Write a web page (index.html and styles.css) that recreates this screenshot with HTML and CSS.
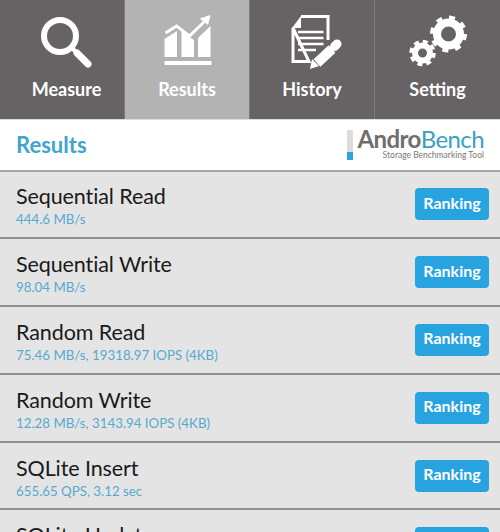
FILE: index.html
```html
<!DOCTYPE html>
<html lang="en">
<head>
  <meta charset="UTF-8" />
  <title>AndroBench - Results</title>
  <link rel="stylesheet" href="styles.css">
</head>
<body>
  <nav class="tabs">
    <a class="tab">
      <svg class="tab-icon" viewBox="0 0 80 60">
        <circle cx="33" cy="23" r="16" fill="none" stroke="#fff" stroke-width="6" />
        <path d="M44 34 L50 40" stroke="#fff" stroke-width="4" />
        <path d="M50 40 L61 51" stroke="#fff" stroke-width="7" stroke-linecap="round" />
      </svg>
      <span>Measure</span>
    </a>
    <a class="tab active">
      <svg class="tab-icon" viewBox="0 0 80 60">
        <path d="M17.5 44 V26 L30 18 V44 Z M34.5 44 V18.5 L47 27 V44 Z M51 44 V25 L63.5 13 V44 Z" fill="#fff" />
        <path d="M18.5 20 L29.5 13 L42.5 23 L57 9" fill="none" stroke="#fff" stroke-width="3" />
        <path d="M52.5 5.5 L63.5 2 L61 12 Z" fill="#fff" />
        <rect x="17.5" y="48" width="47" height="4" fill="#fff" />
      </svg>
      <span>Results</span>
    </a>
    <a class="tab">
      <svg class="tab-icon" viewBox="0 0 80 60">
        <path d="M29 3.5 H56 V27 M37 48.5 H21 V15 Z" fill="none" stroke="#fff" stroke-width="3" />
        <path d="M20 15 L29 3 V15 Z" fill="#fff" />
        <path d="M26 19 H51.5 M26 25 H51.5 M26 31 H51.5 M26 37 H44" stroke="#fff" stroke-width="2.5" />
        <path d="M45 50 L65 31" stroke="#676365" stroke-width="14" />
        <path d="M45 50 L60 36" stroke="#fff" stroke-width="10" />
        <path d="M62.5 33.5 L65 31" stroke="#fff" stroke-width="9" stroke-linecap="round" />
        <path d="M40 46 L47 53 L38 56 Z" fill="#fff" />
      </svg>
      <span>History</span>
    </a>
    <a class="tab">
      <svg class="tab-icon" viewBox="0 0 80 60">
        <circle cx="50.5" cy="21" r="11.5" fill="none" stroke="#fff" stroke-width="8" />
        <circle cx="50.5" cy="21" r="16.5" fill="none" stroke="#fff" stroke-width="4" stroke-dasharray="6 6.96" />
        <circle cx="24.5" cy="40" r="7.5" fill="none" stroke="#fff" stroke-width="6" />
        <circle cx="24.5" cy="40" r="11.5" fill="none" stroke="#fff" stroke-width="3.5" stroke-dasharray="5 4.03" />
      </svg>
      <span>Setting</span>
    </a>
  </nav>

  <header class="title-bar">
    <h1>Results</h1>
    <div class="logo">
      <div class="logo-mark"><i></i></div>
      <div class="logo-text">
        <div class="logo-name"><b>Andro</b>Bench</div>
        <div class="logo-sub">Storage Benchmarking Tool</div>
      </div>
    </div>
  </header>

  <ul class="results">
    <li class="row">
      <div><div class="row-name">Sequential Read</div><div class="row-value">444.6 MB/s</div></div>
      <button class="rank-btn">Ranking</button>
    </li>
    <li class="row">
      <div><div class="row-name">Sequential Write</div><div class="row-value">98.04 MB/s</div></div>
      <button class="rank-btn">Ranking</button>
    </li>
    <li class="row">
      <div><div class="row-name">Random Read</div><div class="row-value">75.46 MB/s, 19318.97 IOPS (4KB)</div></div>
      <button class="rank-btn">Ranking</button>
    </li>
    <li class="row">
      <div><div class="row-name">Random Write</div><div class="row-value">12.28 MB/s, 3143.94 IOPS (4KB)</div></div>
      <button class="rank-btn">Ranking</button>
    </li>
    <li class="row">
      <div><div class="row-name">SQLite Insert</div><div class="row-value">655.65 QPS, 3.12 sec</div></div>
      <button class="rank-btn">Ranking</button>
    </li>
    <li class="row">
      <div><div class="row-name">SQLite Update</div><div class="row-value">512.30 QPS, 3.90 sec</div></div>
      <button class="rank-btn">Ranking</button>
    </li>
  </ul>
</body>
</html>
```

FILE: styles.css
```css
html, body {
  height: 100%;
  overflow: hidden;
}

body {
  margin: 0;
  background: #fff;
  font-family: 'Lato', 'Open Sans', sans-serif;
  color: #1a1a1a;
}

.tabs {
  display: flex;
  height: 119px;
  border-bottom: 1px solid #ddd;
}

.tab {
  flex: 0 0 125px;
  display: flex;
  flex-direction: column;
  align-items: center;
  padding-top: 13px;
  box-sizing: border-box;
  background: #676365;
  color: #fff;
  font-size: 18px;
  font-weight: 700;
  border-right: 1px solid #7e7b7c;
}

.tab:first-child {
  padding-left: 9px;
}

.tab:last-child {
  border-right: none;
}

.tab.active {
  background: #b3b3b3;
}

.tab-icon {
  width: 80px;
  height: 60px;
  margin-bottom: 5px;
}

.title-bar {
  display: flex;
  justify-content: space-between;
  align-items: center;
  height: 49.5px;
  padding: 0 16px;
  border-bottom: 2px solid #a5a5a5;
}

.title-bar h1 {
  margin: 0;
  font-size: 22px;
  font-weight: 700;
  color: #3fa5cf;
}

.logo {
  display: flex;
  gap: 5px;
}

.logo-mark {
  width: 6px;
  height: 30px;
  background: #dcdcdc;
  display: flex;
  align-items: flex-end;
}

.logo-mark i {
  width: 6px;
  height: 8px;
  background: #2fa3d6;
}

.logo-text {
  text-align: right;
}

.logo-name {
  margin: -2px 0 2px;
  font-size: 24px;
  line-height: 21px;
  color: #3b9fc2;
  letter-spacing: -0.6px;
}

.logo-name b {
  color: #706d6b;
  font-weight: 700;
}

.logo-sub {
  font-size: 8.5px;
  line-height: 9px;
  color: #777;
}

.results {
  list-style: none;
  margin: 0;
  padding: 0;
}

.row {
  display: flex;
  justify-content: space-between;
  align-items: center;
  height: 65.8px;
  padding: 0 11px 0 16px;
  background: #e4e4e4;
  border-bottom: 2px solid #8e8e8e;
}

.row-name {
  font-size: 21.5px;
  line-height: 26px;
  letter-spacing: -0.1px;
}

.row-value {
  margin: 2px 0 -2px;
  font-size: 13.3px;
  line-height: 16px;
  color: #55aacf;
}

.rank-btn {
  width: 74px;
  height: 32px;
  padding: 0 0 4px;
  border: none;
  border-radius: 4px;
  background: #27a3e0;
  color: #fff;
  font-family: inherit;
  font-size: 16px;
  font-weight: 700;
}
```
